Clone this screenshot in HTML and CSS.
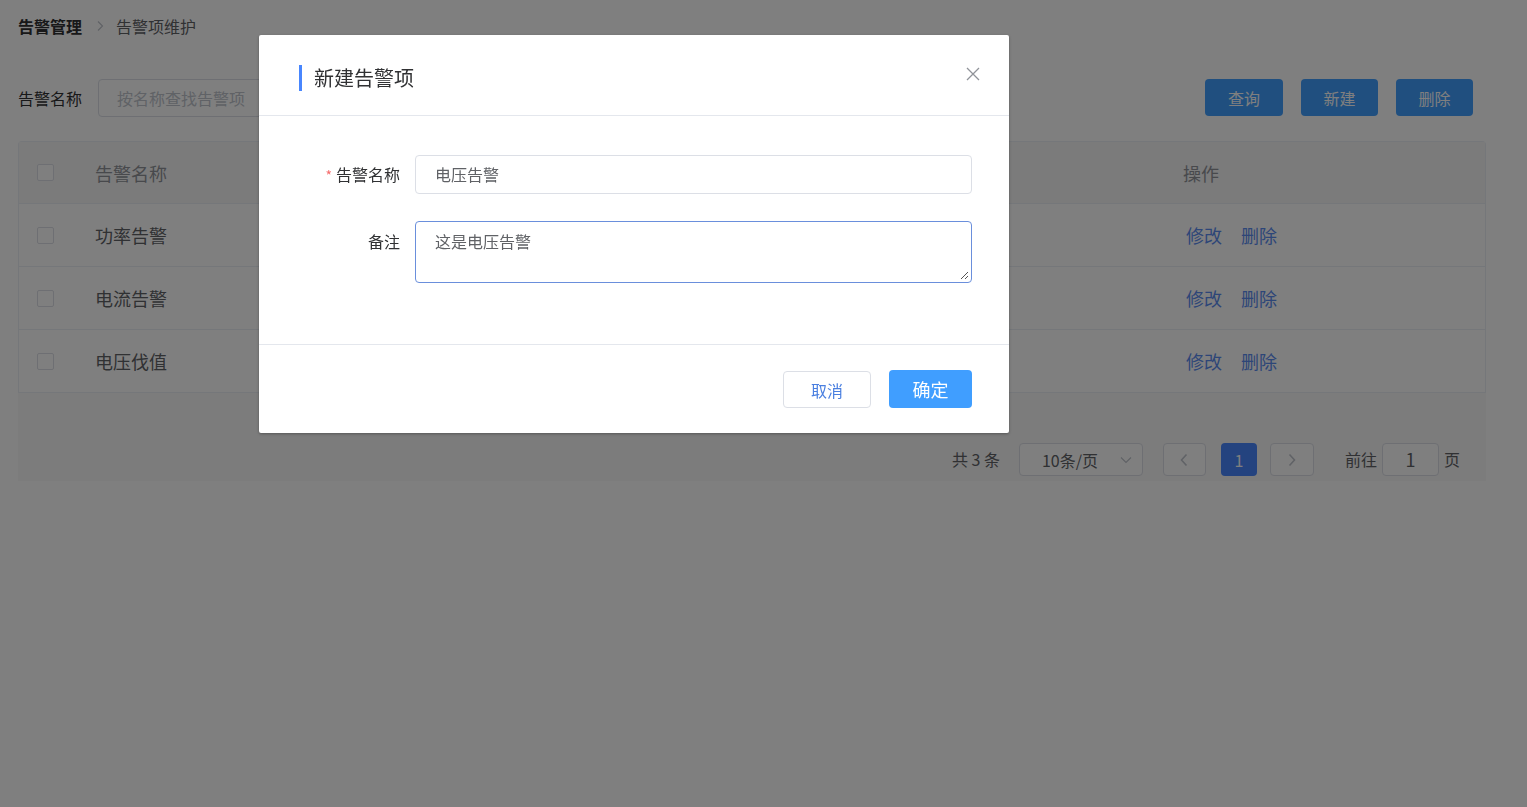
FILE: index.html
```html
<!DOCTYPE html>
<html lang="zh-CN">
<head>
<meta charset="utf-8">
<title>告警项维护</title>
<link rel="stylesheet" href="styles.css">
</head>
<body>
<div class="page">
  <div class="breadcrumb">
    <span class="crumb-strong">告警管理</span>
    <svg class="crumb-sep" width="10" height="12" viewBox="0 0 10 12"><path d="M3 1.5 L7.5 6 L3 10.5" fill="none" stroke="#c0c4cc" stroke-width="1.2"/></svg>
    <span class="crumb">告警项维护</span>
  </div>

  <div class="search-row">
    <label class="search-label">告警名称</label>
    <div class="search-input">按名称查找告警项</div>
    <div class="spacer"></div>
    <div class="btns">
      <button class="btn-primary">查询</button>
      <button class="btn-primary">新建</button>
      <button class="btn-primary">删除</button>
    </div>
  </div>

  <div class="table">
    <div class="tr th">
      <div class="c-check"><span class="checkbox"></span></div>
      <div class="c-name">告警名称</div>
      <div class="c-fill"></div>
      <div class="c-op">操作</div>
    </div>
    <div class="tr">
      <div class="c-check"><span class="checkbox"></span></div>
      <div class="c-name">功率告警</div>
      <div class="c-fill"></div>
      <div class="c-op"><a class="link">修改</a><a class="link">删除</a></div>
    </div>
    <div class="tr">
      <div class="c-check"><span class="checkbox"></span></div>
      <div class="c-name">电流告警</div>
      <div class="c-fill"></div>
      <div class="c-op"><a class="link">修改</a><a class="link">删除</a></div>
    </div>
    <div class="tr">
      <div class="c-check"><span class="checkbox"></span></div>
      <div class="c-name">电压伐值</div>
      <div class="c-fill"></div>
      <div class="c-op"><a class="link">修改</a><a class="link">删除</a></div>
    </div>
  </div>

  <div class="pager">
    <span class="total">共&nbsp;3&nbsp;条</span>
    <div class="size-select">
      <span>10条/页</span>
      <svg width="12" height="8" viewBox="0 0 12 8"><path d="M1 1.5 L6 6.5 L11 1.5" fill="none" stroke="#c0c4cc" stroke-width="1.2"/></svg>
    </div>
    <div class="pg-btn prev"><svg width="10" height="14" viewBox="0 0 10 14"><path d="M7.5 1.5 L2.5 7 L7.5 12.5" fill="none" stroke="#c0c4cc" stroke-width="1.6"/></svg></div>
    <div class="pg-num active">1</div>
    <div class="pg-btn next"><svg width="10" height="14" viewBox="0 0 10 14"><path d="M2.5 1.5 L7.5 7 L2.5 12.5" fill="none" stroke="#c0c4cc" stroke-width="1.6"/></svg></div>
    <span class="goto">前往</span>
    <div class="goto-input">1</div>
    <span class="goto-unit">页</span>
  </div>
</div>

<div class="mask"></div>

<div class="dialog">
  <div class="dlg-header">
    <div class="dlg-title">新建告警项</div>
    <svg class="dlg-close" width="14" height="14" viewBox="0 0 14 14"><path d="M1 1 L13 13 M13 1 L1 13" fill="none" stroke="#909399" stroke-width="1.3"/></svg>
  </div>
  <div class="dlg-body">
    <div class="form-row">
      <label class="form-label"><span class="req">*</span>告警名称</label>
      <div class="form-input">电压告警</div>
    </div>
    <div class="form-row">
      <label class="form-label">备注</label>
      <div class="form-textarea">这是电压告警
        <svg class="resize" width="10" height="10" viewBox="0 0 10 10"><path d="M9 2 L2 9 M9 6 L6 9" fill="none" stroke="#555" stroke-width="1"/></svg>
      </div>
    </div>
  </div>
  <div class="dlg-footer">
    <button class="btn-cancel">取消</button>
    <button class="btn-ok">确定</button>
  </div>
</div>
</body>
</html>
```

FILE: styles.css
```css
* { box-sizing: border-box; }
html, body {
  margin: 0;
  padding: 0;
  background: #ffffff;
  font-family: "Noto Sans CJK SC", "Noto Sans", "Liberation Sans", sans-serif;
  color: #303133;
}
.page {
  width: 1527px;
  height: 807px;
  padding: 14px 41px 0 18px;
}
.breadcrumb {
  display: flex;
  align-items: center;
  height: 24px;
  font-size: 16px;
  line-height: 24px;
}
.crumb-strong { font-weight: 700; color: #303133; }
.crumb-sep { margin: 0 11px 0 13px; }
.crumb { color: #606266; }

.search-row {
  display: flex;
  align-items: center;
  margin-top: 41px;
  height: 38px;
  padding-right: 13px;
}
.search-label { font-size: 16px; color: #303133; width: 80px; }
.search-input {
  width: 230px;
  height: 38px;
  border: 1px solid #dcdfe6;
  border-radius: 4px;
  padding-left: 18px;
  font-size: 16px;
  line-height: 36px;
  color: #c0c4cc;
}
.spacer { flex: 1; }
.btns { display: flex; gap: 18px; margin-top: -1px; }
.btn-primary {
  width: 78px;
  height: 37px;
  border: none;
  border-radius: 4px;
  background: #409eff;
  color: #ffffff;
  font-family: inherit;
  font-size: 16px;
  padding: 0;
}
.btns .btn-primary:nth-child(2) { width: 77px; }
.btns .btn-primary:nth-child(3) { width: 77px; }

.table {
  margin-top: 24px;
  border: 1px solid #ebeef5;
  border-bottom: none;
  border-radius: 4px 4px 0 0;
}
.tr {
  display: flex;
  align-items: center;
  height: 63px;
  border-bottom: 1px solid #ebeef5;
  font-size: 18px;
  color: #606266;
}
.th { background: #f6f6f7; color: #909399; height: 62px; }
.c-check { width: 76px; padding-left: 18px; display: flex; align-items: center; }
.checkbox {
  display: block;
  width: 17px;
  height: 17px;
  border: 1px solid #dcdfe6;
  border-radius: 2px;
  background: #ffffff;
}
.c-name { width: 300px; }
.c-fill { flex: 1; }
.c-op { width: 302px; display: flex; gap: 19px; padding-left: 3px; }
.th .c-op { padding-left: 0; }
.link { color: #5b8cf0; }

.pager {
  display: flex;
  align-items: flex-start;
  height: 88px;
  background: #f8f8f8;
  padding: 50px 26px 0 0;
  justify-content: flex-end;
  font-size: 16px;
  color: #606266;
}
.pager > span { line-height: 33px; }
.total { margin-right: 19px; }
.size-select {
  width: 124px;
  height: 33px;
  border: 1px solid #dcdfe6;
  border-radius: 4px;
  background: #ffffff;
  display: flex;
  align-items: center;
  justify-content: space-between;
  padding: 0 10px 0 22px;
  font-size: 16px;
  color: #606266;
  margin-right: 20px;
}
.pg-btn {
  height: 33px;
  border: 1px solid #dcdfe6;
  border-radius: 4px;
  background: #ffffff;
  display: flex;
  align-items: center;
  justify-content: center;
}
.pg-btn.prev { width: 43px; }
.pg-btn.next { width: 44px; }
.pg-num {
  width: 36px;
  height: 33px;
  margin: 0 13px 0 15px;
  border-radius: 4px;
  display: flex;
  align-items: center;
  justify-content: center;
  font-size: 16px;
}
.pg-num.active { background: #4886fe; color: #ffffff; }
.goto { margin-left: 31px; margin-right: 5px; }
.goto-input {
  width: 57px;
  height: 33px;
  border: 1px solid #dcdfe6;
  border-radius: 4px;
  background: #ffffff;
  text-align: center;
  line-height: 31px;
  font-size: 18px;
  color: #606266;
  margin-right: 5px;
}

.mask {
  position: fixed;
  inset: 0;
  background: rgba(0, 0, 0, 0.5);
}

.dialog {
  position: absolute;
  left: 259px;
  top: 35px;
  width: 750px;
  height: 398px;
  background: #ffffff;
  border-radius: 2px;
  box-shadow: 0 1px 3px rgba(0, 0, 0, 0.3);
  display: flex;
  flex-direction: column;
}
.dlg-header {
  height: 81px;
  border-bottom: 1px solid #e4e7ed;
  display: flex;
  align-items: flex-start;
  justify-content: space-between;
  padding: 30px 29px 0 40px;
}
.dlg-title {
  border-left: 3px solid #4886fe;
  padding-left: 12px;
  height: 26px;
  line-height: 26px;
  font-size: 20px;
  color: #303133;
}
.dlg-close { margin-top: 2px; }
.dlg-body {
  height: 229px;
  padding: 39px 37px 0 40px;
  border-bottom: 1px solid #e4e7ed;
  display: flex;
  flex-direction: column;
  gap: 27px;
}
.form-row { display: flex; align-items: flex-start; }
.form-label {
  width: 116px;
  padding-right: 15px;
  text-align: right;
  font-size: 16px;
  line-height: 39px;
  color: #303133;
}
.req { color: #f56c6c; margin-right: 4px; font-size: 14px; }
.form-input {
  flex: 1;
  height: 39px;
  border: 1px solid #dcdfe6;
  border-radius: 4px;
  padding-left: 19px;
  font-size: 16px;
  line-height: 37px;
  color: #606266;
}
.form-textarea {
  position: relative;
  flex: 1;
  height: 62px;
  margin-top: -1px;
  border: 1px solid #6a8fdc;
  border-radius: 4px;
  padding: 8px 19px;
  font-size: 16px;
  line-height: 22px;
  color: #606266;
}
.resize { position: absolute; right: 2px; bottom: 2px; }
.dlg-footer {
  flex: 1;
  display: flex;
  justify-content: flex-end;
  align-items: flex-start;
  gap: 18px;
  padding: 25px 37px 0 0;
}
.btn-cancel {
  width: 88px;
  height: 37px;
  border: 1px solid #dcdfe6;
  border-radius: 4px;
  background: #ffffff;
  color: #4a7fe0;
  font-family: inherit;
  font-size: 16px;
  padding: 0;
  margin-top: 1px;
}
.btn-ok {
  width: 83px;
  height: 38px;
  border: none;
  border-radius: 4px;
  background: #409eff;
  color: #ffffff;
  font-family: inherit;
  font-size: 18px;
  padding: 0;
}
```
